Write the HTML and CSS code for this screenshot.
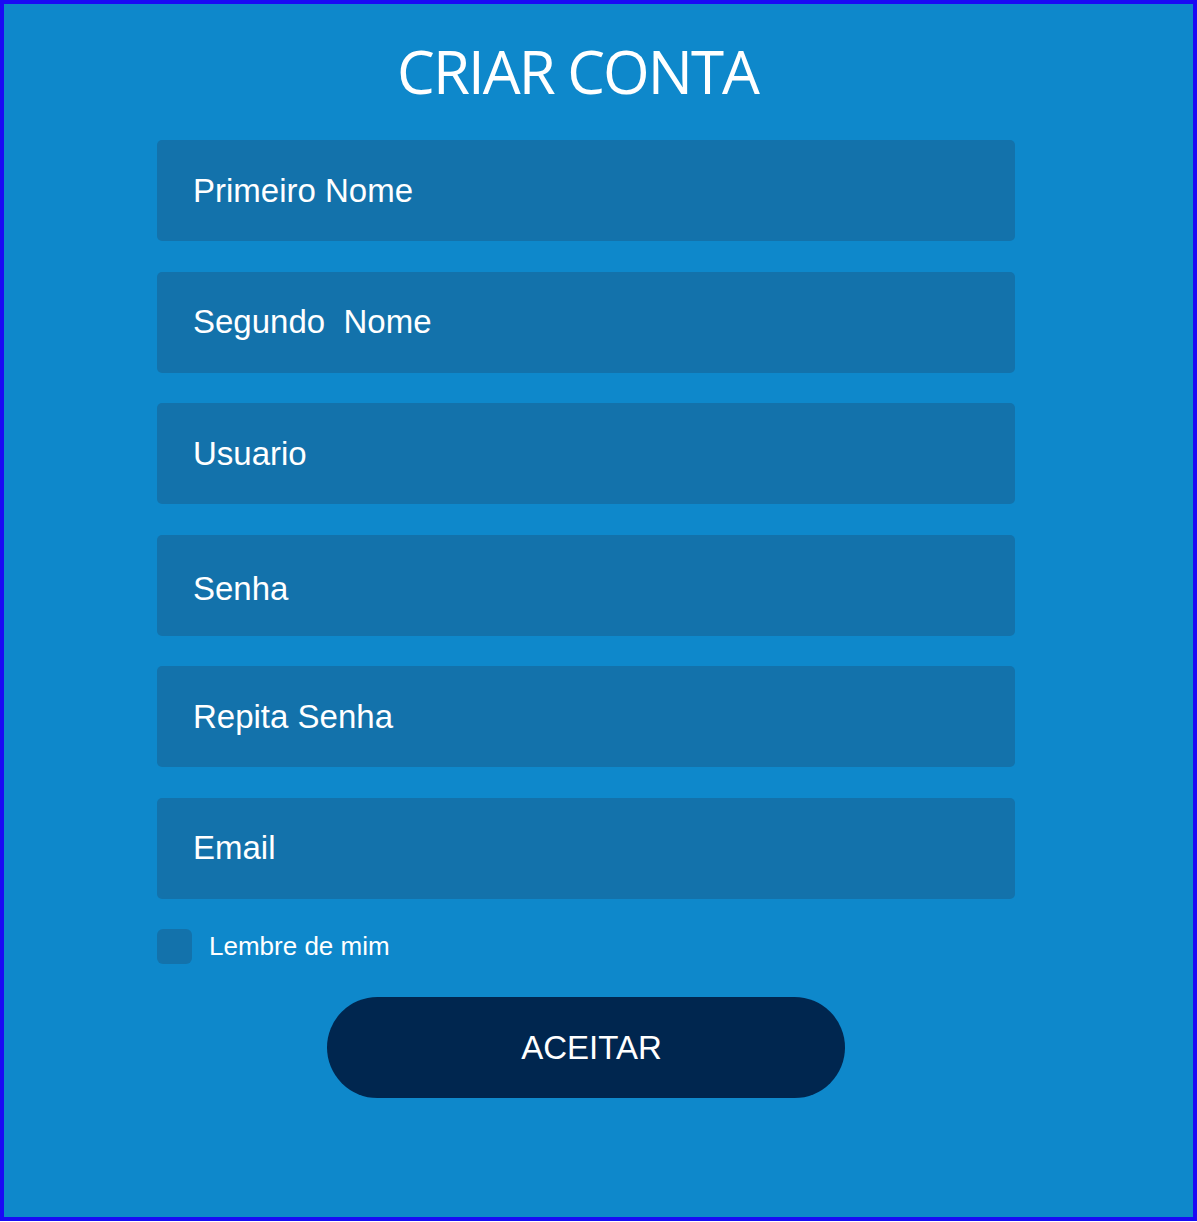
FILE: index.html
```html
<!DOCTYPE html>
<html lang="pt">
<head>
<meta charset="utf-8">
<title>Criar Conta</title>
<link rel="stylesheet" href="styles.css">
</head>
<body>
<div class="frame">
  <h1 class="title">CRIAR CONTA</h1>
  <form class="form">
    <div class="field"><span>Primeiro Nome</span></div>
    <div class="field"><span>Segundo &nbsp;Nome</span></div>
    <div class="field"><span>Usuario</span></div>
    <div class="field field-low"><span>Senha</span></div>
    <div class="field"><span>Repita Senha</span></div>
    <div class="field"><span>Email</span></div>
    <label class="remember"><span class="box"></span><span>Lembre de mim</span></label>
    <div class="actions"><button type="button" class="btn">ACEITAR</button></div>
  </form>
</div>
</body>
</html>
```
FILE: styles.css
```css
html, body {
  margin: 0;
  padding: 0;
  background: #ffffff;
}
.frame {
  box-sizing: border-box;
  width: 1197px;
  height: 1221px;
  border: 4px solid #1a0af5;
  background: #0e88cb;
  font-family: "Liberation Sans", Arial, sans-serif;
  color: #ffffff;
  padding-top: 30px;
}
.title {
  margin: 0;
  font-family: "Open Sans", sans-serif;
  font-weight: 400;
  font-size: 60px;
  line-height: 74px;
  text-align: center;
  padding-right: 42px;
  letter-spacing: -2px;
}
.form {
  margin: 32px 0 0 153px;
  width: 858px;
  display: flex;
  flex-direction: column;
}
.field {
  height: 101px;
  border-radius: 5px;
  background: #1372ab;
  display: flex;
  align-items: center;
  padding-left: 36px;
  font-size: 33px;
  margin-bottom: 30.5px;
}
.field-low span {
  position: relative;
  top: 4px;
}
.remember {
  display: flex;
  align-items: center;
  gap: 17px;
  font-size: 26px;
  margin-top: 0;
}
.box {
  width: 35px;
  height: 35px;
  border-radius: 6px;
  background: #1372ab;
}
.actions {
  display: flex;
  justify-content: center;
  margin-top: 33px;
}
.btn {
  width: 518px;
  height: 101px;
  border: none;
  border-radius: 51px;
  background: #00264f;
  color: #ffffff;
  font-family: "Liberation Sans", Arial, sans-serif;
  font-size: 33px;
  padding: 0 0 0 11px;
}
```
